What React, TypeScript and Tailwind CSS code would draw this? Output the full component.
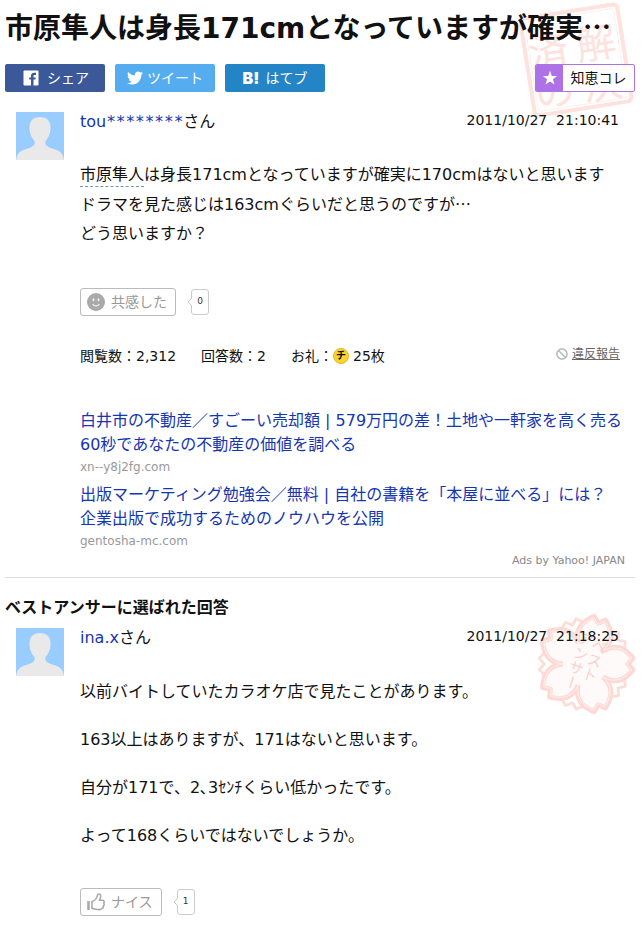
import type { ReactNode } from 'react';
import { FaTwitter, FaBan } from 'react-icons/fa';
import { IoLogoFacebook } from 'react-icons/io';

const ads = [
    {
        title: "白井市の不動産／すごーい売却額 | 579万円の差！土地や一軒家を高く売る",
        text: "60秒であなたの不動産の価値を調べる",
        domain: "xn--y8j2fg.com"
    },
    {
        title: "出版マーケティング勉強会／無料 | 自社の書籍を「本屋に並べる」には？",
        text: "企業出版で成功するためのノウハウを公開",
        domain: "gentosha-mc.com"
    }
];

const answer = [
    "以前バイトしていたカラオケ店で見たことがあります。",
    "163以上はありますが、171はないと思います。",
    "自分が171で、2､3ｾﾝﾁくらい低かったです。",
    "よって168くらいではないでしょうか。"
];

// one petal pointing right, drawn around the origin
const petal = [[24, -17], [34, -19], [42, -12], [44, -10], [47, -8], [48, -6], [47, -4], [44, -2], [43, 0],
    [44, 2], [47, 4], [48, 6], [47, 8], [44, 10], [42, 12], [34, 19], [24, 17], [18, 13]];

function flower(offset: number) {
    let d = "";
    for (let i = 0; i < 5; i++) {
        const a = ((offset + i * 72) * Math.PI) / 180;
        const turn = (x: number, y: number) =>
            `${(x * Math.cos(a) - y * Math.sin(a)).toFixed(1)} ${(x * Math.sin(a) + y * Math.cos(a)).toFixed(1)}`;
        const pts = petal.map(([x, y]) => turn(x, y));
        if (i === 0) d += `M${turn(18, -13)}`;
        for (let p = 0; p < pts.length; p += 3) d += `C${pts[p]} ${pts[p + 1]} ${pts[p + 2]}`;
    }
    return d + "Z";
}

function SolvedSeal() {
    return (
        <svg viewBox="0 0 124 124" className="absolute right-1.5 -top-0.5 w-[124px] h-[124px] -z-10" aria-hidden="true">
            <g transform="rotate(-9 62 62)" fill="#fde2de">
                <rect x="13" y="13" width="98" height="98" rx="4" fill="none" stroke="#fde2de" strokeWidth="4" />
                <rect x="17" y="17" width="90" height="90" rx="2" fill="none" stroke="#fef0ee" strokeWidth="1" />
                <g fontSize="40" textAnchor="middle" className="font-['Noto_Sans_CJK_JP',sans-serif]">
                    <text x="84" y="63">解</text>
                    <text x="84" y="104">決</text>
                    <text x="36" y="63">済</text>
                    <text x="36" y="104">の</text>
                </g>
            </g>
        </svg>
    );
}

function BestStamp() {
    return (
        <svg viewBox="-50 -50 100 100" className="absolute right-0 -top-3.5 w-[100px] h-[100px] -z-10" aria-hidden="true">
            <path d={flower(36)} transform="scale(0.95)" fill="#fff" stroke="#fdddd8" strokeWidth="3" />
            <path d={flower(0)} fill="#fffafa" stroke="#fdd9d4" strokeWidth="5" />
            <path d={flower(0)} transform="scale(0.97)" fill="none" stroke="#fff1ef" strokeWidth="1" />
            <g
                transform="rotate(18)"
                fontSize="15"
                fill="#fbd0ca"
                className="font-['Noto_Sans_CJK_JP',sans-serif] [writing-mode:vertical-rl]"
            >
                <text x="8" y="-29">ベスト</text>
                <text x="-7" y="-31">アンサー</text>
            </g>
        </svg>
    );
}

function Avatar() {
    return (
        <svg viewBox="0 0 48 48" className="w-12 h-12 shrink-0 bg-[#99ccff]" role="img" aria-label="Avatar">
            <path
                d="M24 5c7 0 11 4 10.500 12c-.3 5-2 9-5 12c-.8 3 .5 5 4 6.500c6 2 11.500 3 13.500 8.500l1 4H0l1-4c2-5.500 7.500-6.500 13.500-8.500c3.500-1.500 4.800-3.500 4-6.500c-3-3-4.700-7-5-12C13 9 17 5 24 5z"
                fill="#e9e9e9"
            />
        </svg>
    );
}

function Post({ user, mask, date, stamp, children }: { user: string; mask?: string; date: string; stamp?: ReactNode; children: ReactNode }) {
    return (
        <article className="relative flex gap-4 pl-[11px]">
            {stamp}
            <Avatar />
            <div className="flex-1 min-w-0">
                <div className="flex justify-between pr-4">
                    <p className="leading-5">
                        <a href="#" className="text-[#1635b0]">
                            {user}
                            {mask && <span className="font-['DejaVu_Sans_Mono',monospace]">{mask}</span>}
                        </a>
                        さん
                    </p>
                    <time className="text-sm leading-4 whitespace-pre">{date}</time>
                </div>
                {children}
            </div>
        </article>
    );
}

function Reaction({ icon, label, count }: { icon: ReactNode; label: string; count: number }) {
    return (
        <div className="flex items-center gap-[15px]">
            <button className="flex items-center gap-1.5 h-7 pl-1.5 pr-2 border border-[#bbb] rounded-[3px] text-sm text-[#999]">
                {icon}
                {label}
            </button>
            <span className="relative flex items-center justify-center w-[18px] h-[26px] border border-[#ccc] rounded-[3px] text-[9px] text-[#333]">
                <svg viewBox="0 0 5 8" className="absolute -left-[5px] top-2 w-[5px] h-2">
                    <path d="M5 0L1 4l4 4" fill="#fff" stroke="#ccc" />
                </svg>
                {count}
            </span>
        </div>
    );
}

export default function App() {
    return (
        <main className="relative isolate bg-white pl-[5px] pr-[9px] pt-1.5 pb-2 text-base text-[#111] font-['DejaVu_Sans','Noto_Sans_CJK_JP',sans-serif]" lang="ja">
            <SolvedSeal />
            <h1 className="text-[28px] leading-10 font-bold whitespace-nowrap">
                市原隼人は身長171cmとなっていますが確実
                <span className="font-['Noto_Sans_CJK_JP',sans-serif]">…</span>
            </h1>

            <div className="flex gap-2.5 mt-[15px] text-sm text-white">
                <button className="flex items-center justify-center gap-1.5 w-[100px] h-7 rounded-[2px] bg-[#3b5998]">
                    <IoLogoFacebook className="w-5 h-5" />シェア
                </button>
                <button className="flex items-center justify-center gap-1 w-[100px] h-7 rounded-[2px] bg-[#55acee]">
                    <FaTwitter className="w-4 h-4" />ツイート
                </button>
                <button className="flex items-center justify-center gap-1.5 w-[100px] h-7 rounded-[2px] bg-[#2385c5]">
                    <span className="font-['Inter',sans-serif] font-black text-base">B!</span>はてブ
                </button>
                <button className="flex items-center w-[100px] h-7 ml-auto rounded-[2px] border border-[#ad73e6] bg-white text-[#111] overflow-hidden">
                    <span className="flex items-center justify-center w-[27px] h-full bg-[#ad73e6]">
                        <svg viewBox="0 0 16 16" className="w-4 h-4" fill="#fff">
                            <path d="M8 .8l1.800 5.200h5.400l-4.300 3.300l1.600 5.300L8 11.500l-4.500 3.100l1.600-5.300L.8 6h5.400z" />
                        </svg>
                    </span>
                    <span className="flex-1">知恵コレ</span>
                </button>
            </div>

            <section className="mt-5">
                <Post user="tou" mask="********" date="2011/10/27  21:10:41">
                    <p className="mt-7 leading-[29px]">
                        <a href="#" className="pb-0.5 border-b border-dashed border-[#7a9a9a]">市原隼人</a>
                        は身長171cmとなっていますが確実に170cmはないと思います
                        <br />
                        ドラマを見た感じは163cmぐらいだと思うのですが
                        <span className="font-['Noto_Sans_CJK_JP',sans-serif]">…</span>
                        <br />
                        どう思いますか？
                    </p>
                    <div className="mt-10">
                        <Reaction
                            label="共感した"
                            count={0}
                            icon={
                                <svg viewBox="0 0 18 18" className="w-[18px] h-[18px]">
                                    <circle cx="9" cy="9" r="9" fill="#aaa" />
                                    <path d="M6.500 6v1.500M11.500 6v1.500" stroke="#fff" strokeWidth="1.600" strokeLinecap="round" />
                                    <path d="M6 11.500c1.500 2 4.500 2 6 0" stroke="#fff" fill="none" strokeWidth="1.200" strokeLinecap="round" />
                                </svg>
                            }
                        />
                    </div>
                    <div className="flex items-center mt-[30px] pr-[15px] text-sm leading-5">
                        <span>閲覧数：2,312</span>
                        <span className="ml-[25px]">回答数：2</span>
                        <span className="flex items-center ml-[25px]">
                            お礼：
                            <span className="flex items-center justify-center w-4 h-4 mr-1 rounded-full bg-[#fbd42e] border border-[#e5b820] text-[10px] font-bold">チ</span>
                            25枚
                        </span>
                        <a href="#" className="flex items-center self-start gap-1 ml-auto text-xs leading-4 text-[#666]">
                            <FaBan className="w-3 h-3 text-[#bbb]" />
                            <span className="underline">違反報告</span>
                        </a>
                    </div>
                </Post>

                <ul className="mt-[43px] pl-[75px] space-y-1.5">
                    {ads.map((ad) => (
                        <li key={ad.domain}>
                            <a href="#" className="block leading-6 text-[#1635b0]">
                                <span className="block whitespace-nowrap">{ad.title}</span>
                                <span className="block">{ad.text}</span>
                            </a>
                            <p className="text-xs leading-5 text-[#999]">{ad.domain}</p>
                        </li>
                    ))}
                </ul>
                <p className="mt-0.5 pr-2.5 text-right text-[11px] leading-4 text-[#888]">Ads by Yahoo! JAPAN</p>
            </section>

            <section className="mt-2 pt-5 border-t border-[#ddd]">
                <h2 className="leading-5 font-bold">ベストアンサーに選ばれた回答</h2>
                <div className="mt-2.5">
                    <Post user="ina.x" date="2011/10/27  21:18:25" stamp={<BestStamp />}>
                        <div className="mt-8 space-y-6 leading-6">
                            {answer.map((line) => (
                                <p key={line}>{line}</p>
                            ))}
                        </div>
                        <div className="mt-10">
                            <Reaction
                                label="ナイス"
                                count={1}
                                icon={
                                    <svg viewBox="0 0 18 18" className="w-[18px] h-[18px]" fill="none" stroke="#aaa" strokeWidth="1.600" strokeLinejoin="round">
                                        <path d="M1.500 8v9" strokeWidth="2.600" />
                                        <path d="M5 8.500c3-1 5-3 5.500-6.500c.3-1.500 3-1.300 3.200.8c.2 1.700-.7 3-1.200 4.400h3.200c1.700.3 1.700 2 1 3c.8 1 .5 2-.4 2.700c.3 1.300-.2 2-1 2.400c-.5 1.200-1.300 1.300-2.500 1.300c-3 0-5-.8-7.800-1.200z" />
                                    </svg>
                                }
                            />
                        </div>
                    </Post>
                </div>
            </section>
        </main>
    );
}
